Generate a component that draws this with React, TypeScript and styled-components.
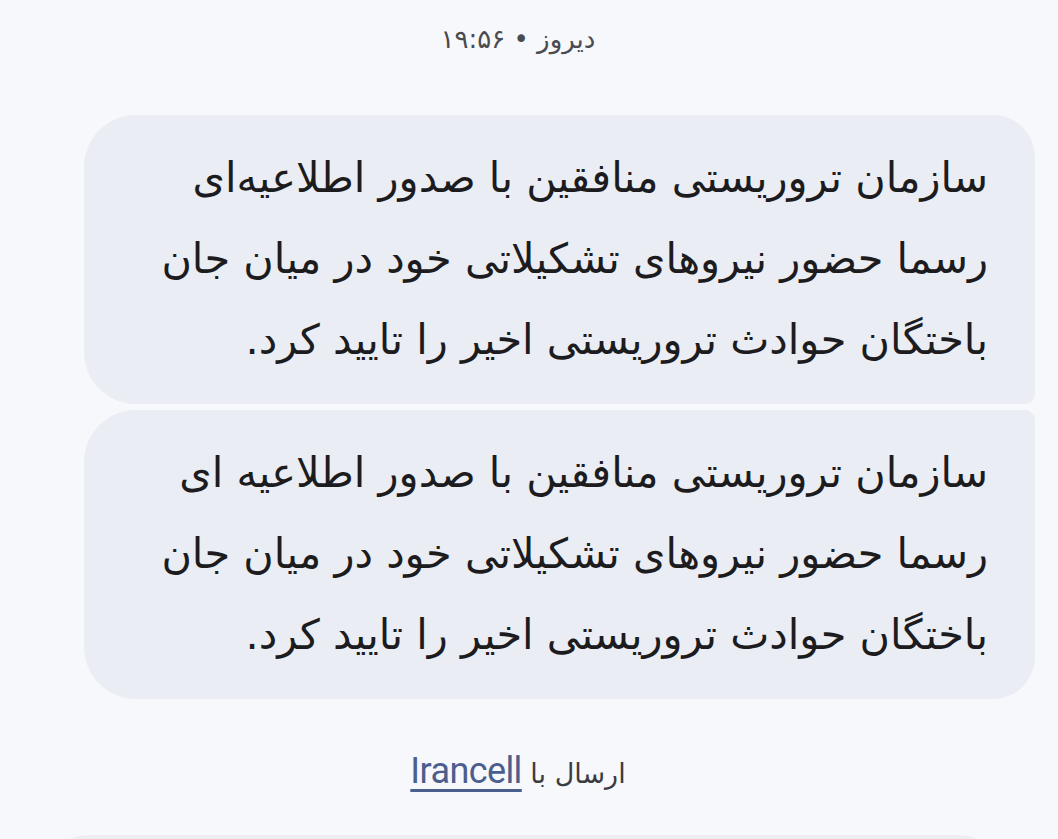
import React from 'react'
import styled, { createGlobalStyle } from 'styled-components'

const GlobalStyle = createGlobalStyle`
  html, body {
    margin: 0;
    padding: 0;
    background: #f7f8fc;
  }
  body {
    font-family: "DejaVu Sans", "Noto Sans", sans-serif;
    overflow: hidden;
  }
`

const Screen = styled.div`
  width: 1058px;
  height: 839px;
  background: #f7f8fc;
  display: flex;
  flex-direction: column;
  overflow: hidden;
  & > * {
    flex-shrink: 0;
  }
`

const Timestamp = styled.div`
  direction: rtl;
  text-align: center;
  color: #4a4a4f;
  font-size: 26px;
  line-height: 32px;
  padding: 23px 22px 0 0;
  height: 115px;
  box-sizing: border-box;
`

const Thread = styled.div`
  display: flex;
  flex-direction: column;
  gap: 6px;
  padding: 0 23px 0 84px;
`

const Bubble = styled.div<{ $tail: 'top' | 'bottom' }>`
  direction: rtl;
  background: #eaedf3;
  color: #1c1c1f;
  font-size: 41.5px;
  line-height: 81px;
  height: 289px;
  box-sizing: border-box;
  padding: 22px 47px 0 40px;
  border-radius: ${(p) =>
    p.$tail === 'bottom' ? '52px 42px 10px 52px' : '52px 10px 42px 52px'};
  white-space: nowrap;
`

const Footer = styled.div`
  direction: rtl;
  text-align: center;
  font-size: 27px;
  line-height: 40px;
  color: #3c3c40;
  padding: 52px 22px 0 0;
  height: 136px;
  box-sizing: border-box;
`

const Operator = styled.span`
  font-family: Roboto, "Liberation Sans", sans-serif;
  color: #4b5f8e;
  font-size: 36px;
  letter-spacing: -0.6px;
  text-decoration: underline;
  text-decoration-thickness: 3px;
  text-underline-offset: 6px;
`

const NextCard = styled.div`
  margin: 0 56px 0 44px;
  height: 80px;
  background: #eceef3;
  border-radius: 44px 44px 0 0;
`

const messages = [
  [
    'سازمان تروریستی منافقین با صدور اطلاعیه‌ای',
    'رسما حضور نیروهای تشکیلاتی خود در میان جان',
    'باختگان حوادث تروریستی اخیر را تایید کرد.',
  ],
  [
    'سازمان تروریستی منافقین با صدور اطلاعیه ای',
    'رسما حضور نیروهای تشکیلاتی خود در میان جان',
    'باختگان حوادث تروریستی اخیر را تایید کرد.',
  ],
]

const App = (): JSX.Element => {
  return (
    <>
      <GlobalStyle />
      <Screen>
        <Timestamp>دیروز • ۱۹:۵۶</Timestamp>
        <Thread>
          {messages.map((lines, i) => (
            <Bubble key={i} $tail={i === 0 ? 'bottom' : 'top'}>
              {lines.map((line, j) => (
                <div key={j}>{line}</div>
              ))}
            </Bubble>
          ))}
        </Thread>
        <Footer>
          ارسال با <Operator>Irancell</Operator>
        </Footer>
        <NextCard />
      </Screen>
    </>
  )
}

export default App
